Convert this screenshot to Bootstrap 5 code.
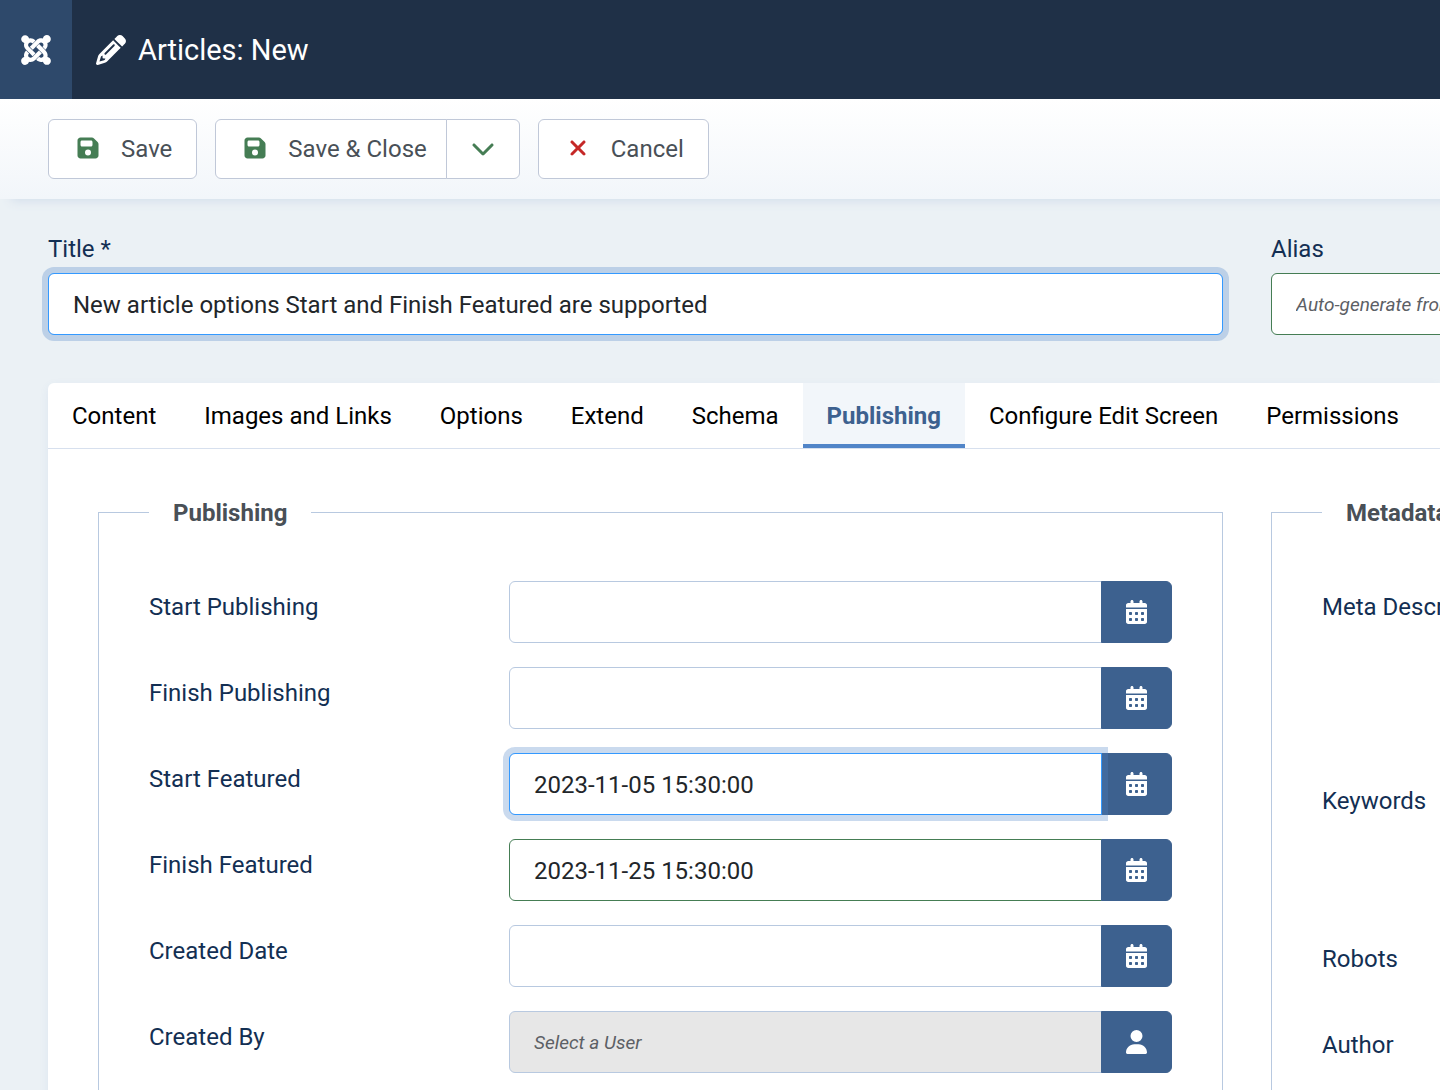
<!DOCTYPE html>
<html lang="en">
<head>
<meta charset="utf-8">
<meta name="viewport" content="width=device-width, initial-scale=1">
<title>Articles: New</title>
<link href="https://cdn.jsdelivr.net/npm/bootstrap@5.3.0/dist/css/bootstrap.min.css" rel="stylesheet">
<style>
  :root { --navy: #1f3047; --blue: #3d618f; --ink: #132f53; --line: #b8c9e0; --green: #457d54; }
  body { font-family: Roboto, "Liberation Sans", sans-serif; font-size: 24px; line-height: 36px; color: #22262a; background: #ebf1f5; }
  svg { fill: currentColor; display: block; }
  .topbar { background: var(--navy); height: 99px; position: relative; z-index: 1; }
  .brand-box { width: 72px; background: #2e496b; }
  .page-title { font-size: 29px; line-height: 36px; font-weight: 400; margin: 0 0 0 12px; }
  .toolbar-strip { padding: 20px 48px; gap: 18px; background: linear-gradient(#fff, #f2f6fa); box-shadow: 10px 3px 10px -1px #d3deeb; }
  .tool-btn { --bs-btn-bg: #fff; --bs-btn-color: #495057; --bs-btn-border-color: #c0c8d8; --bs-btn-hover-bg: #f2f6fa; --bs-btn-hover-color: #495057; --bs-btn-hover-border-color: #c0c8d8;
    --bs-btn-font-size: 24px; --bs-btn-line-height: 36px; --bs-btn-padding-y: 11px; --bs-btn-padding-x: 24px; --bs-btn-border-radius: 6px; }
  .tool-icon { width: 30px; margin-right: 18px; padding-bottom: 2px; }
  .menu-icon { padding-bottom: 2px; }
  .save-close { padding-right: 19px; }
  .icon-green { color: var(--green); }
  .icon-red { color: #c52827; }
  .edit-grid { display: grid; grid-template-columns: minmax(0, 1fr) 169px; column-gap: 48px; }
  .title-row { padding-top: 32px; }
  .clip-x { overflow-x: clip; }
  .wide-field { width: 800px; }
  .form-label, .field-label { color: var(--ink); }
  .form-label { margin-bottom: 6px; }
  .form-control, .form-select { font-size: 24px; line-height: 36px; padding: 13px 24px 11px; border-color: var(--line); border-radius: 6px; color: #22262a; height: 62px; }
  .form-control:placeholder-shown { font-size: 19px; font-style: italic; padding: 12px 24px; }
  .form-control::placeholder { color: #5c6065; }
  .form-control.ok-edge { border-color: var(--green); }
  .form-control.active-edge, .form-control:focus { border-color: #3399ff; box-shadow: 0 0 0 6px rgba(81, 133, 200, .3); }
  .input-group > .form-control.active-edge { z-index: 5; }
  .form-control[readonly] { background: #e7e7e7; }
  .pick-btn { --bs-btn-bg: var(--blue); --bs-btn-color: #fff; --bs-btn-border-color: var(--blue); --bs-btn-hover-bg: #2e496b; --bs-btn-hover-color: #fff; --bs-btn-padding-x: 24px; --bs-btn-border-radius: 6px; }
  .editor-panel { background: #fff; border-radius: 6px 0 0 0; box-shadow: 0 3px 10px rgba(60, 100, 190, .08); }
  .tab-strip { --bs-nav-tabs-border-width: 0; border-bottom: 1px solid #d7e0ee; overflow: hidden; }
  .tab-strip .nav-link { color: #000; padding: 15px 24px 14px; border-radius: 0; white-space: nowrap; border: 0; }
  .tab-strip .nav-link.active { color: var(--blue); font-weight: 700; background: #f2f6fa; box-shadow: inset 0 -4px #5185c8; }
  .panel-body { padding: 46px 0 0 50px; }
  .option-set { border: 1px solid var(--line); padding: 51px 50px 50px; }
  .option-set legend { float: none; width: auto; font-size: 24px; line-height: 34px; font-weight: 700; color: #495057; padding: 1px 24px 0; margin: 0; }
  .field-row { margin-bottom: 24px; }
  .field-label { width: 360px; padding-top: 8px; flex: none; }
  .tall-area { height: 170px; }
  .mid-area { height: 134px; }
</style>
<script src="https://cdn.jsdelivr.net/npm/bootstrap@5.3.0/dist/js/bootstrap.bundle.min.js" defer></script>
</head>
<body class="vh-100 overflow-hidden">
<svg class="d-none" aria-hidden="true">
  <symbol id="i-save" viewBox="0 0 448 512"><path d="M64 32C28.7 32 0 60.7 0 96V416c0 35.3 28.7 64 64 64H384c35.3 0 64-28.7 64-64V173.3c0-17-6.7-33.3-18.7-45.3L352 50.7C340 38.7 323.7 32 306.7 32H64zm0 96c0-17.7 14.3-32 32-32H288c17.7 0 32 14.3 32 32v64c0 17.7-14.3 32-32 32H96c-17.7 0-32-14.3-32-32V128zM224 288a64 64 0 1 1 0 128 64 64 0 1 1 0-128z" fill-rule="evenodd"/></symbol>
  <symbol id="i-cal" viewBox="0 0 448 512"><path fill-rule="evenodd" d="M128 0c17.7 0 32 14.3 32 32V64H288V32c0-17.7 14.3-32 32-32s32 14.3 32 32V64h48c26.5 0 48 21.5 48 48v48H0V112C0 85.5 21.5 64 48 64H96V32c0-17.7 14.3-32 32-32zM0 192H448V464c0 26.5-21.5 48-48 48H48c-26.5 0-48-21.5-48-48V192zM80 256h32q16 0 16 16v32q0 16-16 16H80q-16 0-16-16v-32q0-16 16-16zM208 256h32q16 0 16 16v32q0 16-16 16h-32q-16 0-16-16v-32q0-16 16-16zM336 256h32q16 0 16 16v32q0 16-16 16h-32q-16 0-16-16v-32q0-16 16-16zM80 384h32q16 0 16 16v32q0 16-16 16H80q-16 0-16-16v-32q0-16 16-16zM208 384h32q16 0 16 16v32q0 16-16 16h-32q-16 0-16-16v-32q0-16 16-16zM336 384h32q16 0 16 16v32q0 16-16 16h-32q-16 0-16-16v-32q0-16 16-16z"/></symbol>
</svg>

<header class="topbar d-flex align-items-stretch text-white">
  <a href="#" class="brand-box d-flex align-items-center justify-content-center text-white" aria-label="Home">
    <svg width="30" height="34" viewBox="0 0 448 512"><path d="M.6 92.1C.6 58.8 27.4 32 60.4 32c30 0 54.5 21.9 59.2 50.2 32.6-7.6 67.1.6 96.5 30l-44.3 44.3c-20.5-20.5-42.6-16.3-55.4-3.5-14.3 14.3-14.3 37.9 0 52.2l99.5 99.5-44 44.3c-87.7-87.2-49.7-49.7-99.8-99.7-26.8-26.5-35-64.8-24.8-98.9C20.4 144.6.6 120.7.6 92.1zm129.5 116.4l44.3 44.3c10-10 89.7-89.7 99.7-99.8 14.3-14.3 37.6-14.3 51.9 0 12.8 12.8 17 35-3.5 55.4l44 44.3c31.2-31.2 38.5-67.6 28.9-101.2 29.2-4.1 51.9-29.2 51.9-59.5 0-33.2-26.8-60.1-59.8-60.1-30.3 0-55.4 22.5-59.5 51.6-33.8-9.9-71.7-1.5-98.3 25.1-18.3 19.1-71.1 71.5-99.6 99.9zm266.3 152.2c8.2-32.7-.9-68.5-26.3-93.9-11.8-12.2 5 4.7-99.5-99.7l-44.3 44.3 99.7 99.7c14.3 14.3 14.3 37.6 0 51.9-12.8 12.8-35 17-55.4-3.5l-44 44.3c27.6 30.2 68 38.8 102.7 28 5.5 27.4 29.7 48.1 58.9 48.1 33 0 59.8-26.8 59.8-60.1 0-30.2-22.5-55-51.6-59.1zm-84.3-53.1l-44-44.3c-87 86.4-50.4 50.4-99.7 99.8-14.3 14.3-37.6 14.3-51.9 0-13.1-13.4-16.9-35.3 3.2-55.4l-44-44.3c-30.2 30.2-38 65.2-29.5 98.3-26.7 6-46.2 29.9-46.2 58.2C0 453.2 26.8 480 59.8 480c28.6 0 52.5-19.8 58.6-46.7 32.7 8.2 68.5-.6 94.2-26 32.1-32 12.2-12.4 99.5-99.7z"/></svg>
  </a>
  <div class="d-flex align-items-center ps-4">
    <svg width="30" height="30" viewBox="0 0 512 512" aria-hidden="true"><path d="M410.3 231l11.3-11.3-33.9-33.9-62.1-62.1L291.7 89.8l-11.3 11.3-22.6 22.6L58.6 322.9c-10.4 10.4-18 23.3-22.2 37.4L1 480.7c-2.5 8.4-.2 17.5 6.1 23.7s15.3 8.5 23.7 6.1l120.3-35.4c14.1-4.2 27-11.8 37.4-22.2L387.7 253.7 410.3 231zM160 399.4l-9.1 22.7c-4 3.1-8.5 5.4-13.3 6.9L59.4 452l23-78.1c1.4-4.9 3.8-9.4 6.9-13.3l22.7-9.1v32c0 8.8 7.2 16 16 16h32zM362.7 18.7L348.3 33.2 325.7 55.8 314.3 67.1l33.9 33.9 62.1 62.1 33.9 33.9 11.3-11.3 22.6-22.6 14.5-14.5c25-25 25-65.5 0-90.5L453.3 18.7c-25-25-65.5-25-90.5 0zm-47.4 168l-144 144c-6.2 6.2-16.4 6.2-22.6 0s-6.2-16.4 0-22.6l144-144c6.2-6.2 16.4-6.2 22.6 0s6.2 16.4 0 22.6z"/></svg>
    <h1 class="page-title">Articles: New</h1>
  </div>
</header>

<div class="toolbar-strip d-flex" role="toolbar" aria-label="Toolbar">
  <button type="button" class="btn tool-btn d-flex align-items-center">
    <span class="tool-icon icon-green d-flex justify-content-center"><svg width="22" height="24"><use href="#i-save"/></svg></span>Save
  </button>
  <div class="btn-group">
    <button type="button" class="btn tool-btn save-close d-flex align-items-center">
      <span class="tool-icon icon-green d-flex justify-content-center"><svg width="22" height="24"><use href="#i-save"/></svg></span>Save &amp; Close
    </button>
    <button type="button" class="btn tool-btn d-flex align-items-center" aria-label="More save options">
      <span class="menu-icon icon-green"><svg width="24" height="24" viewBox="0 0 512 512"><path d="M233.4 406.6c12.5 12.5 32.8 12.5 45.3 0l192-192c12.5-12.5 12.5-32.8 0-45.3s-32.8-12.5-45.3 0L256 338.7 86.6 169.4c-12.5-12.5-32.8-12.5-45.3 0s-12.5 32.8 0 45.3l192 192z"/></svg></span>
    </button>
  </div>
  <button type="button" class="btn tool-btn d-flex align-items-center">
    <span class="tool-icon icon-red d-flex justify-content-center"><svg width="18" height="24" viewBox="0 0 384 512"><path d="M342.6 150.6c12.5-12.5 12.5-32.8 0-45.3s-32.8-12.5-45.3 0L192 210.7 86.6 105.4c-12.5-12.5-32.8-12.5-45.3 0s-12.5 32.8 0 45.3L146.7 256 41.4 361.4c-12.5 12.5-12.5 32.8 0 45.3s32.8 12.5 45.3 0L192 301.3 297.4 406.6c12.5 12.5 32.8 12.5 45.3 0s12.5-32.8 0-45.3L237.3 256 342.6 150.6z"/></svg></span>Cancel
  </button>
</div>

<main class="ps-5">
  <div class="edit-grid title-row mb-5">
    <div>
      <label class="form-label d-block" for="f-title">Title *</label>
      <input id="f-title" type="text" class="form-control active-edge" value="New article options Start and Finish Featured are supported">
    </div>
    <div class="clip-x">
      <label class="form-label d-block" for="f-alias">Alias</label>
      <input id="f-alias" type="text" class="form-control ok-edge wide-field" placeholder="Auto-generate from title">
    </div>
  </div>

  <div class="editor-panel">
    <nav class="nav nav-tabs tab-strip flex-nowrap" aria-label="Article sections">
      <a class="nav-link" href="#">Content</a>
      <a class="nav-link" href="#">Images and Links</a>
      <a class="nav-link" href="#">Options</a>
      <a class="nav-link" href="#">Extend</a>
      <a class="nav-link" href="#">Schema</a>
      <a class="nav-link active" href="#" aria-current="page">Publishing</a>
      <a class="nav-link" href="#">Configure Edit Screen</a>
      <a class="nav-link" href="#">Permissions</a>
    </nav>
    <div class="panel-body edit-grid">
      <fieldset class="option-set">
        <legend>Publishing</legend>
        <div class="field-row d-flex">
          <label class="field-label" for="f-start">Start Publishing</label>
          <div class="input-group"><input id="f-start" type="text" class="form-control"><button type="button" class="btn pick-btn" aria-label="Open calendar"><svg width="21" height="24"><use href="#i-cal"/></svg></button></div>
        </div>
        <div class="field-row d-flex">
          <label class="field-label" for="f-finish">Finish Publishing</label>
          <div class="input-group"><input id="f-finish" type="text" class="form-control"><button type="button" class="btn pick-btn" aria-label="Open calendar"><svg width="21" height="24"><use href="#i-cal"/></svg></button></div>
        </div>
        <div class="field-row d-flex">
          <label class="field-label" for="f-fstart">Start Featured</label>
          <div class="input-group"><input id="f-fstart" type="text" class="form-control active-edge" value="2023-11-05 15:30:00"><button type="button" class="btn pick-btn" aria-label="Open calendar"><svg width="21" height="24"><use href="#i-cal"/></svg></button></div>
        </div>
        <div class="field-row d-flex">
          <label class="field-label" for="f-ffinish">Finish Featured</label>
          <div class="input-group"><input id="f-ffinish" type="text" class="form-control ok-edge" value="2023-11-25 15:30:00"><button type="button" class="btn pick-btn" aria-label="Open calendar"><svg width="21" height="24"><use href="#i-cal"/></svg></button></div>
        </div>
        <div class="field-row d-flex">
          <label class="field-label" for="f-created">Created Date</label>
          <div class="input-group"><input id="f-created" type="text" class="form-control"><button type="button" class="btn pick-btn" aria-label="Open calendar"><svg width="21" height="24"><use href="#i-cal"/></svg></button></div>
        </div>
        <div class="field-row d-flex">
          <label class="field-label" for="f-by">Created By</label>
          <div class="input-group"><input id="f-by" type="text" class="form-control" placeholder="Select a User" readonly><button type="button" class="btn pick-btn" aria-label="Select a User"><svg width="21" height="24" viewBox="0 0 448 512"><path d="M224 256A128 128 0 1 0 224 0a128 128 0 1 0 0 256zm-45.7 48C79.8 304 0 383.8 0 482.3C0 498.7 13.3 512 29.7 512H418.3c16.4 0 29.7-13.3 29.7-29.7C448 383.8 368.2 304 269.7 304H178.3z"/></svg></button></div>
        </div>
      </fieldset>
      <div class="clip-x">
        <fieldset class="option-set wide-field">
          <legend>Metadata</legend>
          <div class="field-row d-flex">
            <label class="field-label" for="f-desc">Meta Description</label>
            <textarea id="f-desc" class="form-control tall-area"></textarea>
          </div>
          <div class="field-row d-flex">
            <label class="field-label" for="f-keys">Keywords</label>
            <textarea id="f-keys" class="form-control mid-area"></textarea>
          </div>
          <div class="field-row d-flex">
            <label class="field-label" for="f-robots">Robots</label>
            <select id="f-robots" class="form-select"></select>
          </div>
          <div class="field-row d-flex">
            <label class="field-label" for="f-author">Author</label>
            <input id="f-author" type="text" class="form-control">
          </div>
        </fieldset>
      </div>
    </div>
  </div>
</main>
</body>
</html>
